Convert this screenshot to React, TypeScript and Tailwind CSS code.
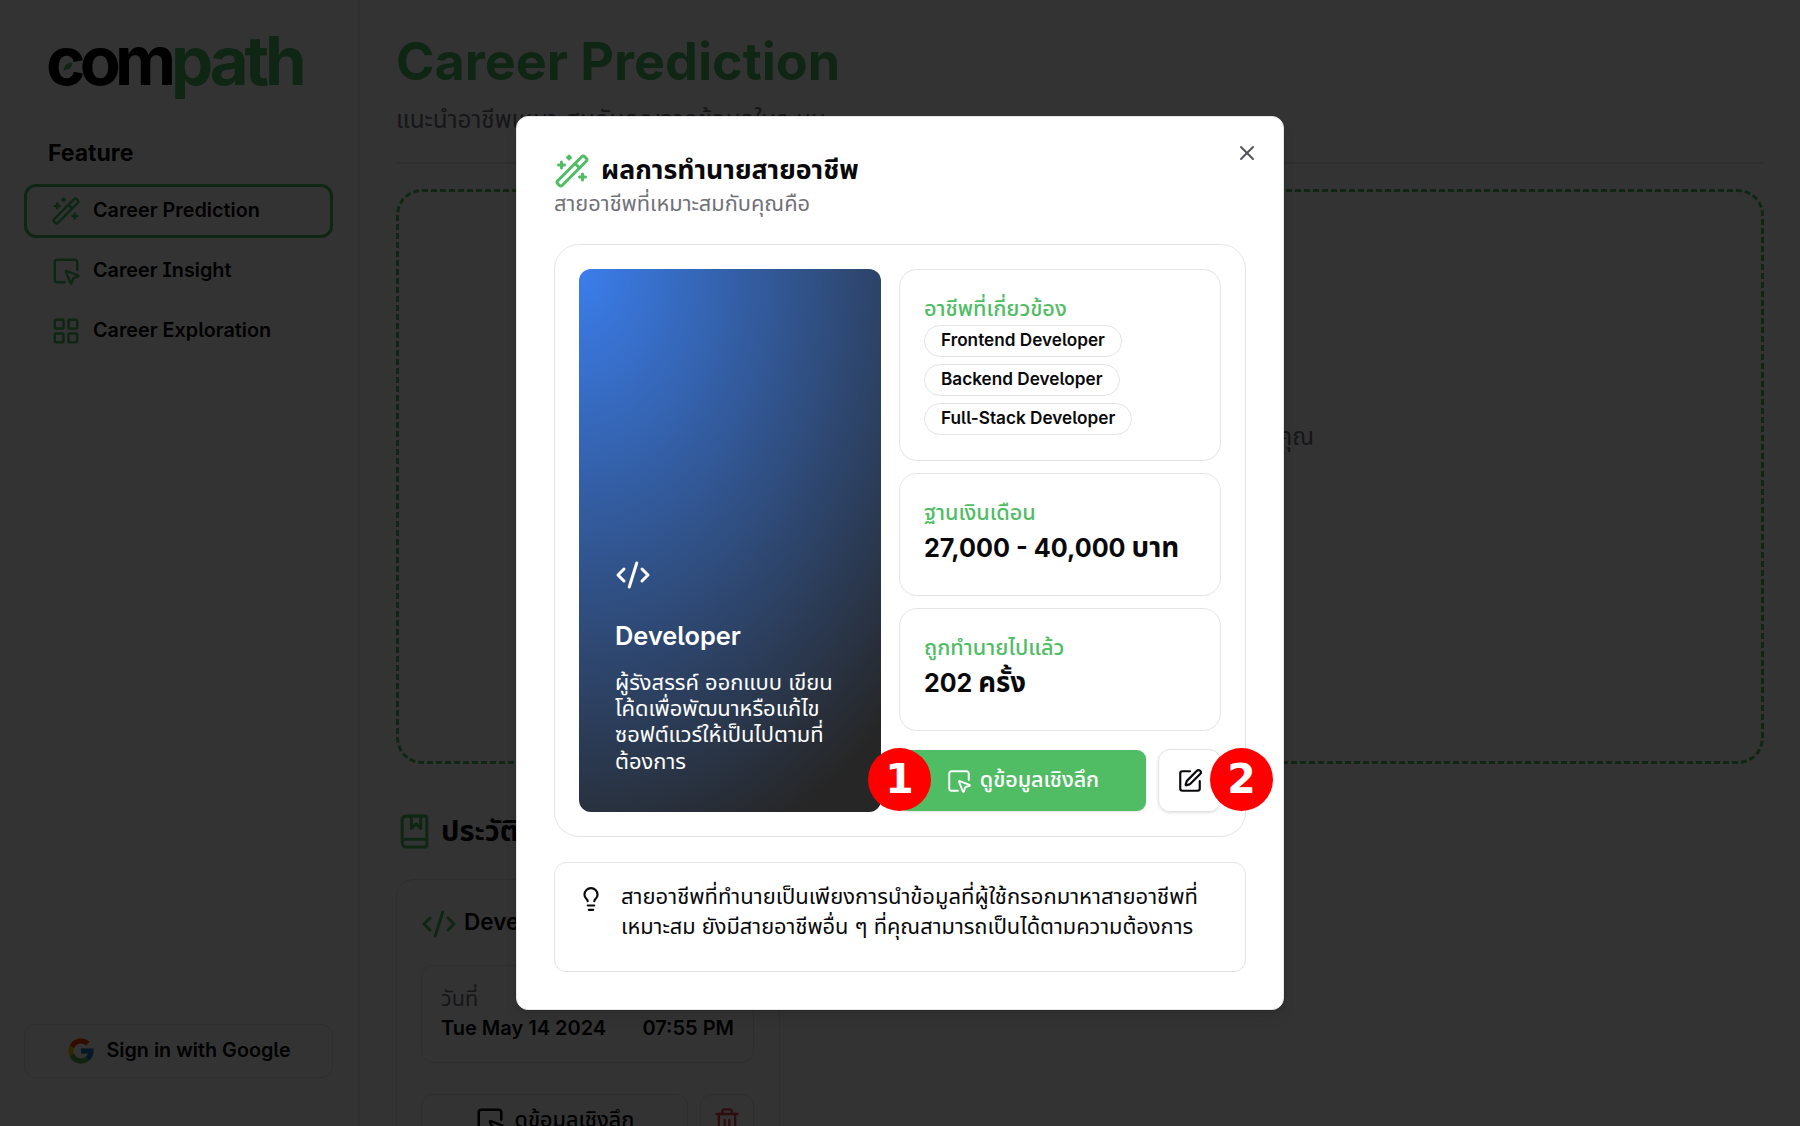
import type { ReactNode } from "react";
import {
  BookMarked,
  CodeXml,
  LayoutGrid,
  Lightbulb,
  SquareMousePointer,
  SquarePen,
  Trash2,
  WandSparkles,
  X,
} from "lucide-react";
import { FcGoogle } from "react-icons/fc";

function Logo() {
  return (
    <div className="relative ml-[46px] mt-[17px] flex h-[88px] w-[270px] items-start whitespace-nowrap text-[67px] font-bold leading-[88px]">
      <span className="w-[125px] tracking-[-5.7px] text-black">com</span>
      <span className="tracking-[-4.2px] text-[#50bd65]">path</span>
      <svg className="absolute left-[17px] top-[45px] h-[10px] w-[10px]" viewBox="0 0 10 10" fill="#50bd65">
        <path d="M9.5 0.5C4 1 0.5 3 0.6 9.4L2.3 7.8C7 8 9 5 9.5 0.5Z" />
      </svg>
    </div>
  );
}

function NavItem({ icon, label, active }: { icon: ReactNode; label: string; active?: boolean }) {
  return (
    <div
      className={`flex h-[54px] items-center rounded-[12px] border-[3px] pl-[24px] ${
        active ? "border-[#50bd65]" : "border-transparent"
      }`}
    >
      <span className="text-[#50bd65]">{icon}</span>
      <span className="ml-[12px] pb-[2px] text-[19.8px] font-semibold leading-[28px]">{label}</span>
    </div>
  );
}

function Sidebar() {
  return (
    <aside className="flex w-[360px] shrink-0 flex-col border-r-2 border-[#e4e4e7]">
      <Logo />
      <h2 className="ml-[48px] mt-[32px] text-[23px] font-bold leading-[32px]">Feature</h2>
      <nav className="ml-[24px] mr-[25px] mt-[15px] flex flex-col gap-[6px]">
        <NavItem active icon={<WandSparkles size={30} />} label="Career Prediction" />
        <NavItem icon={<SquareMousePointer size={30} />} label="Career Insight" />
        <NavItem icon={<LayoutGrid size={30} />} label="Career Exploration" />
      </nav>
      <button className="mb-[48px] ml-[24px] mr-[25px] mt-auto flex h-[54px] items-center justify-center rounded-[12px] border border-[#e4e4e7]">
        <FcGoogle size={30} />
        <span className="ml-[10px] pb-[3px] text-[19.8px] font-semibold leading-[28px]">Sign in with Google</span>
      </button>
    </aside>
  );
}

function HistoryCard() {
  return (
    <div className="mt-[26px] h-[300px] w-[384px] shrink-0 rounded-[18px] border border-[#e4e4e7] pl-[24px] pr-[25px] pt-[24px]">
      <div className="flex h-[40px] items-center">
        <CodeXml size={36} className="text-[#50bd65]" />
        <span className="ml-[7px] pb-[4px] text-[22.6px] font-semibold leading-[30px]">Developer</span>
      </div>
      <div className="mt-[21px] h-[98px] rounded-[12px] border border-[#e4e4e7] px-[19px] pt-[17px]">
        <p className="text-[21.7px] leading-[30px] text-[#71717a]">วันที่</p>
        <div className="flex justify-between text-[20px] font-semibold leading-[30px]">
          <span>Tue May 14 2024</span>
          <span>07:55 PM</span>
        </div>
      </div>
      <div className="mt-[31px] flex gap-[12px]">
        <button className="flex h-[54px] w-[267px] items-center justify-center rounded-[12px] border border-[#e4e4e7]">
          <SquareMousePointer size={30} />
          <span className="ml-[10px] pb-[4px] text-[21.6px] font-medium leading-[28px]">ดูข้อมูลเชิงลึก</span>
        </button>
        <button className="flex h-[54px] w-[54px] items-center justify-center rounded-[12px] border border-[#e4e4e7] text-[#ef4444]">
          <Trash2 size={28} />
        </button>
      </div>
    </div>
  );
}

function Main() {
  return (
    <main className="ml-[36px] flex w-[1368px] flex-col pt-[32px]">
      <h1 className="shrink-0 text-[52.1px] font-bold leading-[60px] text-[#50bd65]">Career Prediction</h1>
      <p className="mt-[11px] shrink-0 text-[24.3px] leading-[32px] text-[#71717a]">
        แนะนำอาชีพเหมาะสมกับคุณจากข้อมูลในระบบ
      </p>
      <div className="mt-[27px] h-[2px] shrink-0 bg-[#e4e4e7]" />
      <section className="mt-[25px] flex h-[575px] shrink-0 justify-center rounded-[26px] border-[3px] border-dashed border-[#50bd65]">
        <p className="mt-[229px] w-[468px] text-right text-[24px] leading-[32px] text-[#71717a]">
          กรอกข้อมูลเพื่อทำนายสายอาชีพของคุณ
        </p>
      </section>
      <div className="mt-[45px] flex h-[44px] shrink-0 items-center">
        <BookMarked size={37} className="text-[#50bd65]" />
        <h2 className="ml-[8px] text-[29px] font-bold leading-[40px]">ประวัติการทำนาย</h2>
      </div>
      <HistoryCard />
    </main>
  );
}

function InfoCard({ label, className, children }: { label: string; className: string; children: ReactNode }) {
  return (
    <div className={`rounded-[18px] border border-[#e4e4e7] px-[24px] pt-[25px] ${className}`}>
      <h4 className="text-[21.7px] font-medium leading-[26px] text-[#50bd65]">{label}</h4>
      {children}
    </div>
  );
}

function Marker({ n, className }: { n: number; className: string }) {
  return (
    <span
      className={`absolute top-[-1px] flex h-[63px] w-[63px] items-center justify-center rounded-full bg-[#ff0000] pb-[1px] font-['DejaVu_Sans'] text-[41px] font-bold leading-[60px] text-white ${className}`}
    >
      {n}
    </span>
  );
}

const jobs = ["Frontend Developer", "Backend Developer", "Full-Stack Developer"];

function Dialog() {
  return (
    <div className="relative h-[894px] w-[768px] rounded-[12px] border border-[#e4e4e7] bg-white px-[37px] pt-[36px] text-[#09090b] shadow-lg">
      <X size={24} strokeWidth={1.9} className="absolute right-[24px] top-[24px] text-[#52525b]" />
      <div className="flex h-[36px] items-center">
        <WandSparkles size={36} className="text-[#50bd65]" />
        <h3 className="ml-[11px] pb-[5px] text-[26.7px] font-bold leading-[36px]">ผลการทำนายสายอาชีพ</h3>
      </div>
      <p className="text-[21.8px] leading-[28px] text-[#71717a]">สายอาชีพที่เหมาะสมกับคุณคือ</p>

      <div className="mt-[27px] flex h-[593px] w-[692px] gap-[18px] rounded-[25px] border border-[#e4e4e7] pl-[24px] pt-[24px]">
        <div className="flex h-[543px] w-[302px] flex-col justify-end rounded-[12px] bg-[radial-gradient(450px_620px_at_0_0,#3b7eec,#262626)] pb-[38px] pl-[36px] text-white">
          <CodeXml size={36} />
          <h3 className="mt-[25px] text-[25.4px] font-semibold leading-[36px]">Developer</h3>
          <p className="mt-[15px] whitespace-nowrap text-[21.9px] leading-[26.3px]">
            ผู้รังสรรค์ ออกแบบ เขียน
            <br />
            โค้ดเพื่อพัฒนาหรือแก้ไข
            <br />
            ซอฟต์แวร์ให้เป็นไปตามที่
            <br />
            ต้องการ
          </p>
        </div>
        <div className="flex w-[322px] flex-col">
          <InfoCard label="อาชีพที่เกี่ยวข้อง" className="h-[192px]">
            <div className="mt-[4px] flex flex-col items-start gap-[7px]">
              {jobs.map((job) => (
                <span
                  key={job}
                  className="flex h-[32px] items-center rounded-full border border-[#e4e4e7] px-[16px] pb-[3px] text-[17.2px] font-semibold leading-[24px]"
                >
                  {job}
                </span>
              ))}
            </div>
          </InfoCard>
          <InfoCard label="ฐานเงินเดือน" className="mt-[12px] h-[123px]">
            <p className="mt-[4px] whitespace-nowrap text-[25.2px] font-bold leading-[36px]">
              27,000 - 40,000 <span className="text-[27.8px]">บาท</span>
            </p>
          </InfoCard>
          <InfoCard label="ถูกทำนายไปแล้ว" className="mt-[12px] h-[123px]">
            <p className="mt-[4px] text-[25px] font-bold leading-[36px]">
              202 <span className="text-[27.5px]">ครั้ง</span>
            </p>
          </InfoCard>
          <div className="relative mt-[18px] flex items-center gap-[12px]">
            <button className="flex h-[61px] w-[247px] items-center justify-center rounded-[9px] bg-[#50bd65] text-white shadow">
              <SquareMousePointer size={26} strokeWidth={1.8} />
              <span className="ml-[8px] pb-[4px] text-[21.5px] font-medium leading-[28px]">ดูข้อมูลเชิงลึก</span>
            </button>
            <button className="flex h-[63px] w-[63px] items-center justify-center rounded-[12px] border border-[#e4e4e7] shadow-sm">
              <SquarePen size={26} />
            </button>
            <Marker n={1} className="left-[-31px]" />
            <Marker n={2} className="right-[-52px]" />
          </div>
        </div>
      </div>

      <div className="mt-[25px] flex h-[110px] w-[692px] rounded-[12px] border border-[#e4e4e7] pl-[23px] pt-[18px]">
        <Lightbulb size={26} className="mt-[5px]" />
        <p className="ml-[17px] whitespace-nowrap text-[22px] leading-[30px]">
          สายอาชีพที่ทำนายเป็นเพียงการนำข้อมูลที่ผู้ใช้กรอกมาหาสายอาชีพที่
          <br />
          <span className="text-[21.8px]">เหมาะสม ยังมีสายอาชีพอื่น ๆ ที่คุณสามารถเป็นได้ตามความต้องการ</span>
        </p>
      </div>
    </div>
  );
}

export default function App() {
  return (
    <div className="relative h-[1126px] w-[1800px] overflow-hidden bg-white font-['Inter','Noto_Sans_Thai',sans-serif] text-[#09090b] [font-feature-settings:'cv05','cv08']">
      <div className="flex h-full">
        <Sidebar />
        <Main />
      </div>
      <div className="absolute inset-0 flex justify-center bg-black/80 pt-[116px]">
        <Dialog />
      </div>
    </div>
  );
}
